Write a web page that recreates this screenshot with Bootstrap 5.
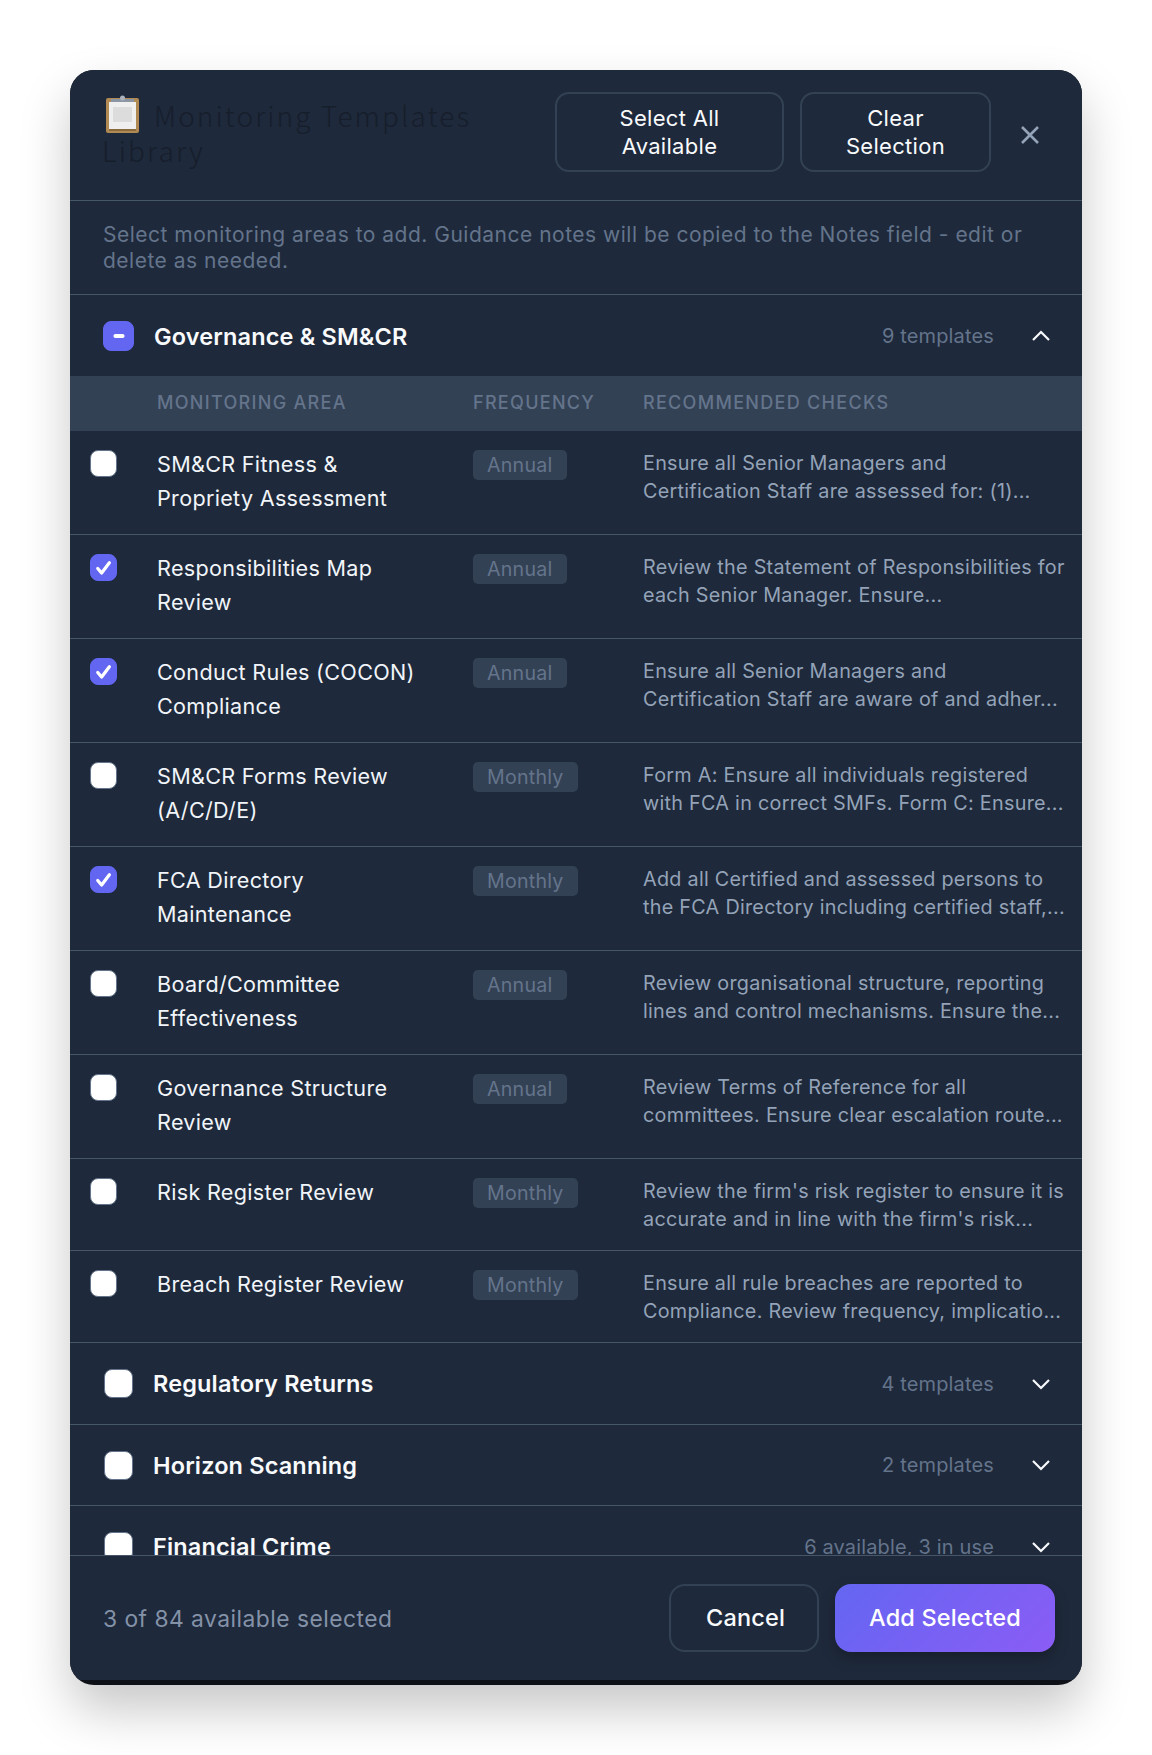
<!DOCTYPE html>
<html lang="en">
<head>
  <meta charset="UTF-8">
  <meta name="viewport" content="width=device-width, initial-scale=1">
  <title>Monitoring Templates Library</title>
  <link href="https://cdn.jsdelivr.net/npm/bootstrap@5.3.0/dist/css/bootstrap.min.css" rel="stylesheet">
  <style>
    body { background: #fff; font-family: "Inter", "Liberation Sans", sans-serif; padding: 70px; height: 1755px; overflow: hidden; }
    .tpl-modal { background: #0d1117; border-radius: 24px; padding-bottom: 5px; box-shadow: 0 25px 50px rgba(0,0,0,.22); overflow: hidden; }
    .tpl-inner { background: #1e293b; height: 1610px; display: flex; flex-direction: column; }
    .tpl-header { height: 131px; padding: 22px 32px; border-bottom: 1px solid #475569; }
    .tpl-title { font-family: "Noto Sans CJK SC", "Noto Sans", sans-serif; font-size: 28px; font-weight: 300; line-height: 34.5px; letter-spacing: 2.1px; color: #161e2b; margin: 3px 0 0; }
    .tpl-title svg { vertical-align: -6px; margin: 0 13px 0 3px; }
    .tpl-ghost { background: transparent; border: 2px solid #334155; border-radius: 14px; color: #f8fafc; font-size: 22px; font-weight: 400; letter-spacing: .3px; line-height: 28px; padding: 10px 12px; flex-shrink: 0; }
    .tpl-ghost:hover { background: transparent; color: #f8fafc; border-color: #334155; }
    .tpl-close { background: none; border: 0; padding: 0; width: 40px; margin-left: 19px; color: #94a3b8; line-height: 0; flex-shrink: 0; }
    .tpl-intro { height: 94px; padding: 21px 33px 0; border-bottom: 1px solid #475569; color: #64748b; font-size: 21px; letter-spacing: .5px; line-height: 26px; margin: 0; }
    .tpl-scroll { height: 1261px; overflow: hidden; border-bottom: 1px solid #475569; }
    .tpl-section { height: 81.5px; padding: 1px 32px 0 33px; border-bottom: 1px solid #475569; }
    .tpl-section.is-open { height: 80.5px; padding-top: 2px; border-bottom: 0; }
    .tpl-section-name { font-size: 23.5px; font-weight: 580; letter-spacing: .15px; color: #f8fafc; margin-left: 20px; }
    .tpl-count { font-size: 20px; letter-spacing: .15px; color: #64748b; margin-left: auto; margin-right: 37px; }
    .tpl-chevron { width: 20px; margin-right: -1px; line-height: 0; color: #f8fafc; }
    .form-check-input.tpl-check { width: 27px; height: 27px; margin: 0; border-radius: 8px; background-color: #fff; border: 1px solid #64748b; flex-shrink: 0; }
    .form-check-input.tpl-check:checked { background-color: #6366f1; border-color: #6366f1; background-image: url("data:image/svg+xml,%3csvg xmlns='http://www.w3.org/2000/svg' viewBox='0 0 20 20'%3e%3cpath fill='none' stroke='%23fff' stroke-linecap='round' stroke-linejoin='round' stroke-width='2.6' d='M5.400 10.800l3.100 3.600 6.200-8.200'/%3e%3c/svg%3e"); }
    .form-check-input.tpl-check:indeterminate { background-color: #6366f1; border-color: #6366f1; background-image: url("data:image/svg+xml,%3csvg xmlns='http://www.w3.org/2000/svg' viewBox='0 0 20 20'%3e%3cpath fill='none' stroke='%23fff' stroke-linecap='round' stroke-width='3' d='M7.500 10h5'/%3e%3c/svg%3e"); }
    .form-check-input.tpl-check.tpl-check-lg { width: 31px; height: 30px; }
    .form-check-input.tpl-check.tpl-check-sec { width: 29px; height: 29px; margin-left: 1px; }
    .tpl-table { table-layout: fixed; margin: 0; --bs-table-bg: transparent; --bs-table-color: #f1f5f9; --bs-table-border-color: #475569; }
    .tpl-table th { background: #334155; height: 55px; padding: 0 0 2px; font-size: 18px; font-weight: 500; letter-spacing: 1.3px; text-transform: uppercase; color: #64748b; border-bottom: 0; vertical-align: middle; }
    .tpl-table td { height: 104px; padding: 19px 0 0; vertical-align: top; border-bottom: 1px solid #475569; }
    .tpl-table tr.tpl-short td { height: 92px; }
    .tpl-col-check { width: 87px; }
    .tpl-col-area { width: 316px; }
    .tpl-col-freq { width: 170px; }
    .tpl-cell-check { padding-left: 19.500px !important; padding-top: 19px !important; line-height: 0; }
    .tpl-area { font-size: 21.6px; font-weight: 440; letter-spacing: .3px; line-height: 34px; padding-top: 16px !important; color: #f1f5f9; padding-right: 40px !important; }
    .tpl-freq { display: inline-block; background: #334155; color: #64748b; font-size: 19.6px; letter-spacing: .25px; line-height: 30px; padding: 0 14px; border-radius: 5px; }
    .tpl-checks { font-size: 19.8px; letter-spacing: .27px; line-height: 28px; color: #94a3b8; white-space: nowrap; padding-top: 18px !important; }
    .tpl-footer { flex: 1; padding: 0 27px 0 33px; }
    .tpl-selected { font-size: 22.8px; letter-spacing: .48px; color: #8492a8; padding-top: 2px; }
    .tpl-btn-cancel { background: transparent; border: 2px solid #334155; border-radius: 16px; color: #f8fafc; font-size: 23.5px; font-weight: 450; letter-spacing: .15px; height: 68px; width: 150px; padding: 0 0 0 3px; }
    .tpl-btn-add { background: linear-gradient(135deg, #6366f1, #8b5cf6); border: 0; border-radius: 16px; color: #fff; font-size: 23.5px; font-weight: 500; letter-spacing: .15px; height: 68px; width: 220px; padding: 0; box-shadow: 0 6px 14px rgba(0,0,0,.25); }
  </style>
</head>
<body>
  <div class="tpl-modal">
    <div class="tpl-inner">
      <!-- Header -->
      <header class="tpl-header d-flex align-items-start">
        <h2 class="tpl-title flex-grow-1"><svg width="36" height="38" viewBox="0 0 36 38"><rect x="1" y="3" width="33" height="35" rx="2" fill="#b08a52"/><rect x="4" y="7" width="27" height="27" fill="#efefef"/><rect x="8" y="12" width="19" height="15" fill="#dcdcdc"/><rect x="4" y="34" width="27" height="2" fill="#8a6a3c"/><rect x="6" y="4" width="23" height="3" fill="#8c95a3"/><circle cx="17.500" cy="3" r="2.500" fill="#aab2bd"/></svg>Monitoring Templates Library</h2>
        <div class="d-flex align-items-center tpl-actions">
          <button class="btn tpl-ghost me-3" type="button" style="width:229px">Select All<br>Available</button>
          <button class="btn tpl-ghost" type="button" style="width:191px">Clear<br>Selection</button>
        </div>
        <button class="tpl-close align-self-center" type="button" aria-label="Close">
          <svg width="20" height="20" viewBox="0 0 20 20"><path d="M2 2l16 16M18 2L2 18" stroke="currentColor" stroke-width="2.600" fill="none"/></svg>
        </button>
      </header>
      <p class="tpl-intro">Select monitoring areas to add. Guidance notes will be copied to the Notes field - edit or delete as needed.</p>

      <div class="tpl-scroll">
        <!-- Governance section, expanded -->
        <div class="tpl-section is-open d-flex align-items-center">
          <input class="form-check-input tpl-check tpl-check-lg" type="checkbox" id="govCheck" aria-label="Governance &amp; SM&amp;CR">
          <span class="tpl-section-name">Governance &amp; SM&amp;CR</span>
          <span class="tpl-count">9 templates</span>
          <span class="tpl-chevron"><svg width="20" height="12" viewBox="0 0 20 12"><path d="M2 10l8-8 8 8" stroke="currentColor" stroke-width="2.200" fill="none"/></svg></span>
        </div>
        <table class="table tpl-table">
          <thead>
            <tr>
              <th class="tpl-col-check"></th>
              <th class="tpl-col-area">Monitoring Area</th>
              <th class="tpl-col-freq">Frequency</th>
              <th>Recommended Checks</th>
            </tr>
          </thead>
          <tbody>
            <tr>
              <td class="tpl-cell-check"><input class="form-check-input tpl-check" type="checkbox" aria-label="Select"></td>
              <td class="tpl-area">SM&amp;CR Fitness &amp; Propriety Assessment</td>
              <td><span class="tpl-freq">Annual</span></td>
              <td class="tpl-checks">Ensure all Senior Managers and<br>Certification Staff are assessed for: (1)...</td>
            </tr>
            <tr>
              <td class="tpl-cell-check"><input class="form-check-input tpl-check" type="checkbox" checked aria-label="Select"></td>
              <td class="tpl-area">Responsibilities Map Review</td>
              <td><span class="tpl-freq">Annual</span></td>
              <td class="tpl-checks">Review the Statement of Responsibilities for<br>each Senior Manager. Ensure...</td>
            </tr>
            <tr>
              <td class="tpl-cell-check"><input class="form-check-input tpl-check" type="checkbox" checked aria-label="Select"></td>
              <td class="tpl-area">Conduct Rules (COCON) Compliance</td>
              <td><span class="tpl-freq">Annual</span></td>
              <td class="tpl-checks">Ensure all Senior Managers and<br>Certification Staff are aware of and adher...</td>
            </tr>
            <tr>
              <td class="tpl-cell-check"><input class="form-check-input tpl-check" type="checkbox" aria-label="Select"></td>
              <td class="tpl-area">SM&amp;CR Forms Review (A/C/D/E)</td>
              <td><span class="tpl-freq">Monthly</span></td>
              <td class="tpl-checks">Form A: Ensure all individuals registered<br>with FCA in correct SMFs. Form C: Ensure...</td>
            </tr>
            <tr>
              <td class="tpl-cell-check"><input class="form-check-input tpl-check" type="checkbox" checked aria-label="Select"></td>
              <td class="tpl-area">FCA Directory Maintenance</td>
              <td><span class="tpl-freq">Monthly</span></td>
              <td class="tpl-checks">Add all Certified and assessed persons to<br>the FCA Directory including certified staff,...</td>
            </tr>
            <tr>
              <td class="tpl-cell-check"><input class="form-check-input tpl-check" type="checkbox" aria-label="Select"></td>
              <td class="tpl-area">Board/Committee Effectiveness</td>
              <td><span class="tpl-freq">Annual</span></td>
              <td class="tpl-checks">Review organisational structure, reporting<br>lines and control mechanisms. Ensure the...</td>
            </tr>
            <tr>
              <td class="tpl-cell-check"><input class="form-check-input tpl-check" type="checkbox" aria-label="Select"></td>
              <td class="tpl-area">Governance Structure Review</td>
              <td><span class="tpl-freq">Annual</span></td>
              <td class="tpl-checks">Review Terms of Reference for all<br>committees. Ensure clear escalation route...</td>
            </tr>
            <tr class="tpl-short">
              <td class="tpl-cell-check"><input class="form-check-input tpl-check" type="checkbox" aria-label="Select"></td>
              <td class="tpl-area">Risk Register Review</td>
              <td><span class="tpl-freq">Monthly</span></td>
              <td class="tpl-checks">Review the firm's risk register to ensure it is<br>accurate and in line with the firm's risk...</td>
            </tr>
            <tr class="tpl-short">
              <td class="tpl-cell-check"><input class="form-check-input tpl-check" type="checkbox" aria-label="Select"></td>
              <td class="tpl-area">Breach Register Review</td>
              <td><span class="tpl-freq">Monthly</span></td>
              <td class="tpl-checks">Ensure all rule breaches are reported to<br>Compliance. Review frequency, implicatio...</td>
            </tr>
          </tbody>
        </table>
        <!-- Collapsed sections -->
        <div class="tpl-section d-flex align-items-center">
          <input class="form-check-input tpl-check tpl-check-sec" type="checkbox" aria-label="Regulatory Returns">
          <span class="tpl-section-name">Regulatory Returns</span>
          <span class="tpl-count">4 templates</span>
          <span class="tpl-chevron"><svg width="20" height="12" viewBox="0 0 20 12"><path d="M2 2l8 8 8-8" stroke="currentColor" stroke-width="2.200" fill="none"/></svg></span>
        </div>
        <div class="tpl-section d-flex align-items-center">
          <input class="form-check-input tpl-check tpl-check-sec" type="checkbox" aria-label="Horizon Scanning">
          <span class="tpl-section-name">Horizon Scanning</span>
          <span class="tpl-count">2 templates</span>
          <span class="tpl-chevron"><svg width="20" height="12" viewBox="0 0 20 12"><path d="M2 2l8 8 8-8" stroke="currentColor" stroke-width="2.200" fill="none"/></svg></span>
        </div>
        <div class="tpl-section d-flex align-items-center">
          <input class="form-check-input tpl-check tpl-check-sec" type="checkbox" aria-label="Financial Crime">
          <span class="tpl-section-name">Financial Crime</span>
          <span class="tpl-count">6 available, 3 in use</span>
          <span class="tpl-chevron"><svg width="20" height="12" viewBox="0 0 20 12"><path d="M2 2l8 8 8-8" stroke="currentColor" stroke-width="2.200" fill="none"/></svg></span>
        </div>
      </div>

      <footer class="tpl-footer d-flex align-items-center">
        <span class="tpl-selected me-auto">3 of 84 available selected</span>
        <button class="btn tpl-btn-cancel me-3" type="button">Cancel</button>
        <button class="btn tpl-btn-add" type="button">Add Selected</button>
      </footer>
    </div>
  </div>

  <script>
    document.getElementById("govCheck").indeterminate = true;
  </script>
  <script src="https://cdn.jsdelivr.net/npm/bootstrap@5.3.0/dist/js/bootstrap.bundle.min.js"></script>
</body>
</html>
